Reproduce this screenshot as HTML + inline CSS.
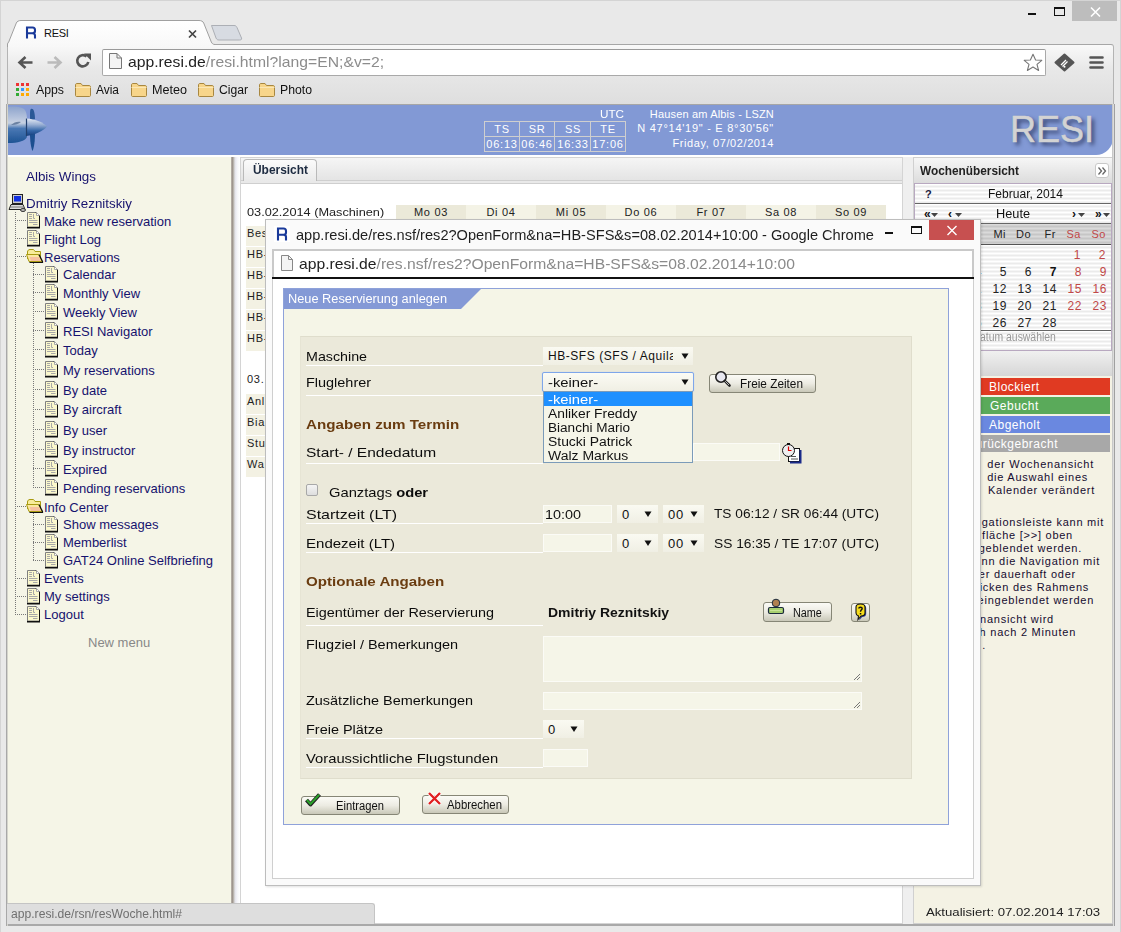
<!DOCTYPE html>
<html><head><meta charset="utf-8"><title>RESI</title><style>
*{margin:0;padding:0;box-sizing:border-box}
html,body{width:1121px;height:932px;overflow:hidden}
body{position:relative;background:#e9e9e9;font-family:"Liberation Sans",sans-serif}
.a{position:absolute}
.t{white-space:nowrap}
svg{overflow:visible}
</style></head><body>
<div class="a" style="left:0px;top:0px;width:1121px;height:1px;background:#d4d4d4"></div>
<div class="a" style="left:0px;top:0px;width:1px;height:932px;background:#d4d4d4"></div>
<div class="a" style="left:1120px;top:0px;width:1px;height:932px;background:#d4d4d4"></div>
<div class="a" style="left:1028px;top:13px;width:8px;height:2px;background:#111"></div>
<div class="a" style="left:1054px;top:7px;width:11px;height:9px;border:1px solid #111;border-top-width:2px"></div>
<div class="a" style="left:1072px;top:1px;width:45px;height:20px;background:#bdbdbd"></div>
<svg class="a" style="left:1090px;top:7px;" width="11" height="10" viewBox="0 0 11 10"><path d="M1 0.5 L10 9.5 M10 0.5 L1 9.5" stroke="#fff" stroke-width="1.6"/></svg>
<div class="a" style="left:7px;top:44px;width:1107px;height:61px;background:linear-gradient(#f9f9f9,#e8e8e8 40%,#dedede);border-top-right-radius:3px;border-right:1px solid #b4b4b4;border-left:1px solid #b4b4b4;border-top:1px solid #a6a6a6"></div>
<svg class="a" style="left:0px;top:0px;" width="260" height="50" viewBox="0 0 260 50"><defs><linearGradient id="tg" x1="0" y1="0" x2="0" y2="1"><stop offset="0" stop-color="#ffffff"/><stop offset="1" stop-color="#f8f8f8"/></linearGradient></defs><path d="M7.5 47 V44 C7.5 43.3 8 42.8 8.7 42 L16.3 23 C17 21.5 18.5 20.5 21 20.5 L199 20.5 C201.5 20.5 203 21.5 203.7 23 L211.3 42 C212 43.5 213 44.5 215 44.5 L215 47 Z" fill="url(#tg)"/><path d="M7.5 47 V44 C7.5 43.3 8 42.8 8.7 42 L16.3 23 C17 21.5 18.5 20.5 21 20.5 L199 20.5 C201.5 20.5 203 21.5 203.7 23 L211.3 42 C212 43.5 213 44.5 215 44.5" fill="none" stroke="#a0a0a0" stroke-width="1"/><path d="M211.5 25.5 L234 25.5 C235.5 25.5 236.3 26 237 27.5 L241.5 38 C242 39.5 241 40 239.5 40 L219 40 C217.5 40 216.7 39.5 216 38 Z" fill="#d7dbe2" stroke="#acafb5" stroke-width="1"/></svg>
<div class="a" style="left:25px;top:26px;width:12px;height:12px;background:#fff"></div>
<svg class="a" style="left:25px;top:26px;" width="12" height="13" viewBox="0 0 12 13"><path d="M2 12.5 V1.5 H7.5 C9 1.5 10 2.3 10 4 V5 C10 6.6 9 7.2 7.5 7.2 H2 M7.2 7.2 C9 7.2 10 8 10 9.5 V12.5" fill="none" stroke="#1a3a9a" stroke-width="2.1"/></svg>
<div id="t01451643" class="a t" style="left:44px;top:23px;font-size:11px;line-height:20px;color:#111;font-weight:normal;letter-spacing:-0.3px">RESI</div>
<svg class="a" style="left:188px;top:30px;" width="9" height="8" viewBox="0 0 9 8"><path d="M1 0.5 L8 7.5 M8 0.5 L1 7.5" stroke="#444" stroke-width="1.7"/></svg>
<svg class="a" style="left:17px;top:55px;" width="17" height="15" viewBox="0 0 17 15"><path d="M15.5 7.5 H4 M8.5 2 L2.5 7.5 L8.5 13" fill="none" stroke="#555" stroke-width="2.6" stroke-linejoin="miter"/></svg>
<svg class="a" style="left:46px;top:55px;" width="17" height="15" viewBox="0 0 17 15"><path d="M1.5 7.5 H13 M8.5 2 L14.5 7.5 L8.5 13" fill="none" stroke="#bbb" stroke-width="2.6"/></svg>
<svg class="a" style="left:75px;top:53px;" width="17" height="17" viewBox="0 0 17 17"><path d="M13.3 9 A5.6 5.6 0 1 1 11.5 3.5" fill="none" stroke="#555" stroke-width="2.6"/><path d="M9 0.5 L16 0.5 L16 7.5 Z" fill="#555"/></svg>
<div class="a" style="left:102px;top:49px;width:944px;height:27px;background:#fff;border:1px solid #a9a9a9;border-top-color:#9a9a9a;border-radius:2px"></div>
<svg class="a" style="left:109px;top:53px;" width="13" height="16" viewBox="0 0 13 16"><path d="M0.5 0.5 H8 L12.5 5 V15.5 H0.5 Z" fill="#f4f4f4" stroke="#777"/><path d="M8 0.5 V5 H12.5" fill="none" stroke="#777"/></svg>
<div id="tc79b2f64" class="a t" style="left:128px;top:52px;font-size:15px;line-height:20px;color:#222;font-weight:normal;transform:scaleX(1.0480);transform-origin:0 0;">app.resi.de<span style="color:#8c8c8c">/resi.html?lang=EN;&amp;v=2;</span></div>
<svg class="a" style="left:1023px;top:53px;" width="20" height="19" viewBox="0 0 20 19"><path d="M10 1.2 L12.6 7 L18.8 7.3 L14 11.3 L15.6 17.5 L10 14 L4.4 17.5 L6 11.3 L1.2 7.3 L7.4 7 Z" fill="#fff" stroke="#777" stroke-width="1.1" stroke-linejoin="round"/></svg>
<svg class="a" style="left:1054px;top:53px;" width="21" height="19" viewBox="0 0 21 19"><path d="M10.5 1.5 L19.5 9.5 L10.5 17.5 L1.5 9.5 Z" fill="#555" stroke="#555" stroke-width="2" stroke-linejoin="round"/><path d="M7 12 L12 7 M8.5 13.5 L13.5 8.5" stroke="#fff" stroke-width="1.3"/><circle cx="10.5" cy="13.8" r="1" fill="#fff"/></svg>
<svg class="a" style="left:1089px;top:56px;" width="15" height="14" viewBox="0 0 15 14"><path d="M1.5 1.5 H13.5 M1.5 6.5 H13.5 M1.5 11.5 H13.5" stroke="#555" stroke-width="2.6" stroke-linecap="round"/></svg>
<svg class="a" style="left:16px;top:83px;" width="14" height="14" viewBox="0 0 14 14"><rect x="0" y="0" width="3" height="3" fill="#e33"/><rect x="5" y="0" width="3" height="3" fill="#e33"/><rect x="10" y="0" width="3" height="3" fill="#e33"/><rect x="0" y="5" width="3" height="3" fill="#3a3"/><rect x="5" y="5" width="3" height="3" fill="#39f"/><rect x="10" y="5" width="3" height="3" fill="#fa0"/><rect x="0" y="10" width="3" height="3" fill="#3a3"/><rect x="5" y="10" width="3" height="3" fill="#fa0"/><rect x="10" y="10" width="3" height="3" fill="#fa0"/></svg>
<div id="t481c23da" class="a t" style="left:36px;top:80px;font-size:12px;line-height:20px;color:#111;font-weight:normal;transform:scaleX(1.0243);transform-origin:0 0;">Apps</div>
<svg class="a" style="left:75px;top:83px;" width="16" height="14" viewBox="0 0 16 14"><path d="M0.5 2 C0.5 1 1 0.5 2 0.5 H6 L7.5 2.5 H14 C15 2.5 15.5 3 15.5 4 V12.5 C15.5 13 15 13.5 14.5 13.5 H1.5 C1 13.5 0.5 13 0.5 12.5 Z" fill="#f7d58a" stroke="#a88740"/><path d="M0.5 4.5 H15.5" stroke="#fbe7b5"/></svg>
<div id="tdad9027f" class="a t" style="left:96px;top:80px;font-size:12px;line-height:20px;color:#111;font-weight:normal;transform:scaleX(0.9936);transform-origin:0 0;">Avia</div>
<svg class="a" style="left:131px;top:83px;" width="16" height="14" viewBox="0 0 16 14"><path d="M0.5 2 C0.5 1 1 0.5 2 0.5 H6 L7.5 2.5 H14 C15 2.5 15.5 3 15.5 4 V12.5 C15.5 13 15 13.5 14.5 13.5 H1.5 C1 13.5 0.5 13 0.5 12.5 Z" fill="#f7d58a" stroke="#a88740"/><path d="M0.5 4.5 H15.5" stroke="#fbe7b5"/></svg>
<div id="t31459b48" class="a t" style="left:152px;top:80px;font-size:12px;line-height:20px;color:#111;font-weight:normal;transform:scaleX(1.0507);transform-origin:0 0;">Meteo</div>
<svg class="a" style="left:198px;top:83px;" width="16" height="14" viewBox="0 0 16 14"><path d="M0.5 2 C0.5 1 1 0.5 2 0.5 H6 L7.5 2.5 H14 C15 2.5 15.5 3 15.5 4 V12.5 C15.5 13 15 13.5 14.5 13.5 H1.5 C1 13.5 0.5 13 0.5 12.5 Z" fill="#f7d58a" stroke="#a88740"/><path d="M0.5 4.5 H15.5" stroke="#fbe7b5"/></svg>
<div id="t5c8f7181" class="a t" style="left:219px;top:80px;font-size:12px;line-height:20px;color:#111;font-weight:normal;transform:scaleX(1.0113);transform-origin:0 0;">Cigar</div>
<svg class="a" style="left:259px;top:83px;" width="16" height="14" viewBox="0 0 16 14"><path d="M0.5 2 C0.5 1 1 0.5 2 0.5 H6 L7.5 2.5 H14 C15 2.5 15.5 3 15.5 4 V12.5 C15.5 13 15 13.5 14.5 13.5 H1.5 C1 13.5 0.5 13 0.5 12.5 Z" fill="#f7d58a" stroke="#a88740"/><path d="M0.5 4.5 H15.5" stroke="#fbe7b5"/></svg>
<div id="t24e90273" class="a t" style="left:280px;top:80px;font-size:12px;line-height:20px;color:#111;font-weight:normal;transform:scaleX(1.0211);transform-origin:0 0;">Photo</div>
<div class="a" style="left:8px;top:104px;width:1105px;height:821px;background:#fff"></div>
<div class="a" style="left:8px;top:104px;width:1105px;height:1px;background:#a6a6a6"></div>
<div class="a" style="left:8px;top:105px;width:1105px;height:50px;background:#8299d5;border-bottom-right-radius:17px"></div>
<svg class="a" style="left:8px;top:105px;" width="42" height="47" viewBox="0 0 42 47"><defs><linearGradient id="pg" x1="0" y1="0" x2="0" y2="1"><stop offset="0" stop-color="#8ea4cc"/><stop offset="0.3" stop-color="#b4c2dc"/><stop offset="0.45" stop-color="#c8d2e2"/><stop offset="0.6" stop-color="#4a78b4"/><stop offset="1" stop-color="#1e5494"/></linearGradient><linearGradient id="cg" x1="0" y1="0" x2="0" y2="1"><stop offset="0" stop-color="#e4eaf4"/><stop offset="0.35" stop-color="#9ab0d4"/><stop offset="0.7" stop-color="#3466a8"/><stop offset="1" stop-color="#163e7c"/></linearGradient><filter id="bl" x="-20%" y="-20%" width="140%" height="140%"><feGaussianBlur stdDeviation="0.55"/></filter></defs><g filter="url(#bl)"><path d="M0 2 C7 1 13 2 16 4 C19 7 19 12 19 18 L19 32 C17 36 10 38 0 38 Z" fill="url(#pg)"/><path d="M3 20 C6 17 10 16 13 17 C11 19 7 20 3 20 Z" fill="#34507a" opacity="0.6"/><path d="M23 4 C25 3 27 6 27 14 L24 15 L22 14 C22 8 22 4 23 4 Z" fill="#2a5896"/><path d="M22 29 L27 29 C27 36 26 43 24.5 46 C23 43 22 36 22 29 Z" fill="#1f4f90"/><path d="M18 13.5 C28 14 35 17.5 39 21.5 C35 26 27 30 18 31 Z" fill="url(#cg)"/><path d="M18.5 13.5 L18.5 31" stroke="#22406e" stroke-width="1.2"/></g></svg>
<div class="a" style="left:484px;top:121px;width:142px;height:31px;border:1px solid #cfcfcf"></div>
<div class="a" style="left:519px;top:121px;width:1px;height:31px;background:#cfcfcf"></div>
<div class="a" style="left:554px;top:121px;width:1px;height:31px;background:#cfcfcf"></div>
<div class="a" style="left:590px;top:121px;width:1px;height:31px;background:#cfcfcf"></div>
<div class="a" style="left:484px;top:136px;width:142px;height:1px;background:#cfcfcf"></div>
<div id="t65919c31" class="a t" style="left:600px;top:104px;font-size:11px;line-height:20px;color:#fff;font-weight:normal;transform:scaleX(1.0644);transform-origin:0 0;">UTC</div>
<div class="a t" style="left:484px;top:119px;width:36px;text-align:center;font-size:11px;line-height:20px;color:#fff;letter-spacing:0.6px">TS</div>
<div class="a t" style="left:484px;top:134px;width:36px;text-align:center;font-size:11px;line-height:20px;color:#fff;letter-spacing:0.8px">06:13</div>
<div class="a t" style="left:519px;top:119px;width:36px;text-align:center;font-size:11px;line-height:20px;color:#fff;letter-spacing:0.6px">SR</div>
<div class="a t" style="left:519px;top:134px;width:36px;text-align:center;font-size:11px;line-height:20px;color:#fff;letter-spacing:0.8px">06:46</div>
<div class="a t" style="left:555px;top:119px;width:36px;text-align:center;font-size:11px;line-height:20px;color:#fff;letter-spacing:0.6px">SS</div>
<div class="a t" style="left:555px;top:134px;width:36px;text-align:center;font-size:11px;line-height:20px;color:#fff;letter-spacing:0.8px">16:33</div>
<div class="a t" style="left:590px;top:119px;width:36px;text-align:center;font-size:11px;line-height:20px;color:#fff;letter-spacing:0.6px">TE</div>
<div class="a t" style="left:590px;top:134px;width:36px;text-align:center;font-size:11px;line-height:20px;color:#fff;letter-spacing:0.8px">17:06</div>
<div class="a t" id="rcc1d4a6c" style="right:347px;top:104px;font-size:11px;line-height:20px;color:#fff;letter-spacing:0.170px;">Hausen am Albis - LSZN</div>
<div class="a t" id="rd31bb80b" style="right:347px;top:118px;font-size:11px;line-height:20px;color:#fff;letter-spacing:0.727px;">N 47°14'19" - E 8°30'56"</div>
<div class="a t" id="r0c8ea4c8" style="right:347px;top:133px;font-size:11px;line-height:20px;color:#fff;letter-spacing:0.593px;">Friday, 07/02/2014</div>
<div class="a" style="left:1010px;top:112px;font-size:36px;line-height:36px;color:#d3d3d3;text-shadow:3px 3px 4px #34406a;-webkit-text-stroke:0.5px #d3d3d3;letter-spacing:0px">RESI</div>
<div class="a" style="left:8px;top:157px;width:223px;height:768px;background:#f5f5e7"></div>
<div class="a" style="left:231px;top:157px;width:9px;height:768px;background:linear-gradient(90deg,#bdb6ae 0,#9e968e 1.5px,#c6c2be 3px,#e3e3ea 4px,#f4f4f8 6px,#fff 9px)"></div>
<div id="t1f0e2cf7" class="a t" style="left:26px;top:167px;font-size:13px;line-height:20px;color:#16126e;font-weight:normal;transform:scaleX(1.0311);transform-origin:0 0;">Albis Wings</div>
<svg class="a" style="left:8px;top:194px;" width="18" height="18" viewBox="0 0 18 18"><rect x="4.5" y="0.5" width="10" height="9" fill="#ccc" stroke="#222"/><rect x="6" y="2" width="7" height="5.5" fill="#1030e0"/><path d="M1 15.5 L3 10.5 H15 L17 15.5 Z" fill="#ddd" stroke="#222"/><path d="M2 13 H16" stroke="#777"/><ellipse cx="15" cy="16" rx="2.5" ry="1.5" fill="#bbb" stroke="#333"/></svg>
<div id="tac2cf840" class="a t" style="left:26px;top:194px;font-size:13px;line-height:20px;color:#16126e;font-weight:normal;transform:scaleX(1.0264);transform-origin:0 0;">Dmitriy Reznitskiy</div>
<svg class="a" style="left:27px;top:212px;" width="14" height="17" viewBox="0 0 14 17"><path d="M0.5 0.5 H9 L12.5 4 V15 H0.5 Z" fill="#fbf8cc" stroke="#808080"/><path d="M9 0.5 L12.5 4 V15.5 M0 15.5 H13" fill="none" stroke="#111" stroke-width="1"/><path d="M0 16 H13" stroke="#111" stroke-width="1"/><path d="M9.5 0.5 V3.5 H12.5" fill="#fff" stroke="#999" stroke-width="0.8"/><path d="M2 2.5 H5 M2 4.5 H5 M2 6.5 H5 M6.5 2 V6.5 H8 M2 8.5 H10.5 M2 10.5 H10.5 M6 12.5 H10.5" stroke="#a8a8a8" stroke-width="1" fill="none"/></svg>
<div class="a" style="left:15px;top:220px;width:12px;height:1px;background:repeating-linear-gradient(90deg,#777 0 1px,transparent 1px 2px)"></div>
<div id="t6f4574a2" class="a t" style="left:44px;top:212px;font-size:13px;line-height:20px;color:#16126e;font-weight:normal;">Make new reservation</div>
<svg class="a" style="left:27px;top:230px;" width="14" height="17" viewBox="0 0 14 17"><path d="M0.5 0.5 H9 L12.5 4 V15 H0.5 Z" fill="#fbf8cc" stroke="#808080"/><path d="M9 0.5 L12.5 4 V15.5 M0 15.5 H13" fill="none" stroke="#111" stroke-width="1"/><path d="M0 16 H13" stroke="#111" stroke-width="1"/><path d="M9.5 0.5 V3.5 H12.5" fill="#fff" stroke="#999" stroke-width="0.8"/><path d="M2 2.5 H5 M2 4.5 H5 M2 6.5 H5 M6.5 2 V6.5 H8 M2 8.5 H10.5 M2 10.5 H10.5 M6 12.5 H10.5" stroke="#a8a8a8" stroke-width="1" fill="none"/></svg>
<div class="a" style="left:15px;top:238px;width:12px;height:1px;background:repeating-linear-gradient(90deg,#777 0 1px,transparent 1px 2px)"></div>
<div id="t707657b8" class="a t" style="left:44px;top:230px;font-size:13px;line-height:20px;color:#16126e;font-weight:normal;">Flight Log</div>
<svg class="a" style="left:26px;top:249px;" width="17" height="14" viewBox="0 0 17 14"><path d="M1.5 10 V3 C1.5 1.5 2.5 0.5 4 0.5 H7 C8 0.5 8.5 1.5 9 2.5 H14.5 V10" fill="#f8ec9a" stroke="#a89a10"/><path d="M0.5 5.5 H12.5 L16 12.5 H3 Z" fill="#fae8a0" stroke="#a89a10"/><path d="M3.5 8 H13 L15 12 H5 Z" fill="#f6c0a0"/><path d="M13 5.5 L16.5 12.5 V13.5 H3.5" fill="none" stroke="#111" stroke-width="1.2"/></svg>
<div class="a" style="left:15px;top:256px;width:11px;height:1px;background:repeating-linear-gradient(90deg,#777 0 1px,transparent 1px 2px)"></div>
<div id="t05da8306" class="a t" style="left:44px;top:248px;font-size:13px;line-height:20px;color:#16126e;font-weight:normal;">Reservations</div>
<svg class="a" style="left:45px;top:266px;" width="14" height="17" viewBox="0 0 14 17"><path d="M0.5 0.5 H9 L12.5 4 V15 H0.5 Z" fill="#fbf8cc" stroke="#808080"/><path d="M9 0.5 L12.5 4 V15.5 M0 15.5 H13" fill="none" stroke="#111" stroke-width="1"/><path d="M0 16 H13" stroke="#111" stroke-width="1"/><path d="M9.5 0.5 V3.5 H12.5" fill="#fff" stroke="#999" stroke-width="0.8"/><path d="M2 2.5 H5 M2 4.5 H5 M2 6.5 H5 M6.5 2 V6.5 H8 M2 8.5 H10.5 M2 10.5 H10.5 M6 12.5 H10.5" stroke="#a8a8a8" stroke-width="1" fill="none"/></svg>
<div class="a" style="left:33px;top:274px;width:12px;height:1px;background:repeating-linear-gradient(90deg,#777 0 1px,transparent 1px 2px)"></div>
<div id="t145ddcab" class="a t" style="left:63px;top:265px;font-size:13px;line-height:20px;color:#16126e;font-weight:normal;">Calendar</div>
<svg class="a" style="left:45px;top:284px;" width="14" height="17" viewBox="0 0 14 17"><path d="M0.5 0.5 H9 L12.5 4 V15 H0.5 Z" fill="#fbf8cc" stroke="#808080"/><path d="M9 0.5 L12.5 4 V15.5 M0 15.5 H13" fill="none" stroke="#111" stroke-width="1"/><path d="M0 16 H13" stroke="#111" stroke-width="1"/><path d="M9.5 0.5 V3.5 H12.5" fill="#fff" stroke="#999" stroke-width="0.8"/><path d="M2 2.5 H5 M2 4.5 H5 M2 6.5 H5 M6.5 2 V6.5 H8 M2 8.5 H10.5 M2 10.5 H10.5 M6 12.5 H10.5" stroke="#a8a8a8" stroke-width="1" fill="none"/></svg>
<div class="a" style="left:33px;top:292px;width:12px;height:1px;background:repeating-linear-gradient(90deg,#777 0 1px,transparent 1px 2px)"></div>
<div id="t2f721ccd" class="a t" style="left:63px;top:284px;font-size:13px;line-height:20px;color:#16126e;font-weight:normal;">Monthly View</div>
<svg class="a" style="left:45px;top:303px;" width="14" height="17" viewBox="0 0 14 17"><path d="M0.5 0.5 H9 L12.5 4 V15 H0.5 Z" fill="#fbf8cc" stroke="#808080"/><path d="M9 0.5 L12.5 4 V15.5 M0 15.5 H13" fill="none" stroke="#111" stroke-width="1"/><path d="M0 16 H13" stroke="#111" stroke-width="1"/><path d="M9.5 0.5 V3.5 H12.5" fill="#fff" stroke="#999" stroke-width="0.8"/><path d="M2 2.5 H5 M2 4.5 H5 M2 6.5 H5 M6.5 2 V6.5 H8 M2 8.5 H10.5 M2 10.5 H10.5 M6 12.5 H10.5" stroke="#a8a8a8" stroke-width="1" fill="none"/></svg>
<div class="a" style="left:33px;top:311px;width:12px;height:1px;background:repeating-linear-gradient(90deg,#777 0 1px,transparent 1px 2px)"></div>
<div id="t1b36f34c" class="a t" style="left:63px;top:303px;font-size:13px;line-height:20px;color:#16126e;font-weight:normal;">Weekly View</div>
<svg class="a" style="left:45px;top:322px;" width="14" height="17" viewBox="0 0 14 17"><path d="M0.5 0.5 H9 L12.5 4 V15 H0.5 Z" fill="#fbf8cc" stroke="#808080"/><path d="M9 0.5 L12.5 4 V15.5 M0 15.5 H13" fill="none" stroke="#111" stroke-width="1"/><path d="M0 16 H13" stroke="#111" stroke-width="1"/><path d="M9.5 0.5 V3.5 H12.5" fill="#fff" stroke="#999" stroke-width="0.8"/><path d="M2 2.5 H5 M2 4.5 H5 M2 6.5 H5 M6.5 2 V6.5 H8 M2 8.5 H10.5 M2 10.5 H10.5 M6 12.5 H10.5" stroke="#a8a8a8" stroke-width="1" fill="none"/></svg>
<div class="a" style="left:33px;top:330px;width:12px;height:1px;background:repeating-linear-gradient(90deg,#777 0 1px,transparent 1px 2px)"></div>
<div id="t644daee1" class="a t" style="left:63px;top:322px;font-size:13px;line-height:20px;color:#16126e;font-weight:normal;">RESI Navigator</div>
<svg class="a" style="left:45px;top:341px;" width="14" height="17" viewBox="0 0 14 17"><path d="M0.5 0.5 H9 L12.5 4 V15 H0.5 Z" fill="#fbf8cc" stroke="#808080"/><path d="M9 0.5 L12.5 4 V15.5 M0 15.5 H13" fill="none" stroke="#111" stroke-width="1"/><path d="M0 16 H13" stroke="#111" stroke-width="1"/><path d="M9.5 0.5 V3.5 H12.5" fill="#fff" stroke="#999" stroke-width="0.8"/><path d="M2 2.5 H5 M2 4.5 H5 M2 6.5 H5 M6.5 2 V6.5 H8 M2 8.5 H10.5 M2 10.5 H10.5 M6 12.5 H10.5" stroke="#a8a8a8" stroke-width="1" fill="none"/></svg>
<div class="a" style="left:33px;top:349px;width:12px;height:1px;background:repeating-linear-gradient(90deg,#777 0 1px,transparent 1px 2px)"></div>
<div id="tac2a235c" class="a t" style="left:63px;top:341px;font-size:13px;line-height:20px;color:#16126e;font-weight:normal;">Today</div>
<svg class="a" style="left:45px;top:361px;" width="14" height="17" viewBox="0 0 14 17"><path d="M0.5 0.5 H9 L12.5 4 V15 H0.5 Z" fill="#fbf8cc" stroke="#808080"/><path d="M9 0.5 L12.5 4 V15.5 M0 15.5 H13" fill="none" stroke="#111" stroke-width="1"/><path d="M0 16 H13" stroke="#111" stroke-width="1"/><path d="M9.5 0.5 V3.5 H12.5" fill="#fff" stroke="#999" stroke-width="0.8"/><path d="M2 2.5 H5 M2 4.5 H5 M2 6.5 H5 M6.5 2 V6.5 H8 M2 8.5 H10.5 M2 10.5 H10.5 M6 12.5 H10.5" stroke="#a8a8a8" stroke-width="1" fill="none"/></svg>
<div class="a" style="left:33px;top:369px;width:12px;height:1px;background:repeating-linear-gradient(90deg,#777 0 1px,transparent 1px 2px)"></div>
<div id="tdca9e473" class="a t" style="left:63px;top:361px;font-size:13px;line-height:20px;color:#16126e;font-weight:normal;">My reservations</div>
<svg class="a" style="left:45px;top:381px;" width="14" height="17" viewBox="0 0 14 17"><path d="M0.5 0.5 H9 L12.5 4 V15 H0.5 Z" fill="#fbf8cc" stroke="#808080"/><path d="M9 0.5 L12.5 4 V15.5 M0 15.5 H13" fill="none" stroke="#111" stroke-width="1"/><path d="M0 16 H13" stroke="#111" stroke-width="1"/><path d="M9.5 0.5 V3.5 H12.5" fill="#fff" stroke="#999" stroke-width="0.8"/><path d="M2 2.5 H5 M2 4.5 H5 M2 6.5 H5 M6.5 2 V6.5 H8 M2 8.5 H10.5 M2 10.5 H10.5 M6 12.5 H10.5" stroke="#a8a8a8" stroke-width="1" fill="none"/></svg>
<div class="a" style="left:33px;top:389px;width:12px;height:1px;background:repeating-linear-gradient(90deg,#777 0 1px,transparent 1px 2px)"></div>
<div id="tfe1371e7" class="a t" style="left:63px;top:381px;font-size:13px;line-height:20px;color:#16126e;font-weight:normal;">By date</div>
<svg class="a" style="left:45px;top:401px;" width="14" height="17" viewBox="0 0 14 17"><path d="M0.5 0.5 H9 L12.5 4 V15 H0.5 Z" fill="#fbf8cc" stroke="#808080"/><path d="M9 0.5 L12.5 4 V15.5 M0 15.5 H13" fill="none" stroke="#111" stroke-width="1"/><path d="M0 16 H13" stroke="#111" stroke-width="1"/><path d="M9.5 0.5 V3.5 H12.5" fill="#fff" stroke="#999" stroke-width="0.8"/><path d="M2 2.5 H5 M2 4.5 H5 M2 6.5 H5 M6.5 2 V6.5 H8 M2 8.5 H10.5 M2 10.5 H10.5 M6 12.5 H10.5" stroke="#a8a8a8" stroke-width="1" fill="none"/></svg>
<div class="a" style="left:33px;top:409px;width:12px;height:1px;background:repeating-linear-gradient(90deg,#777 0 1px,transparent 1px 2px)"></div>
<div id="t19cd7436" class="a t" style="left:63px;top:400px;font-size:13px;line-height:20px;color:#16126e;font-weight:normal;">By aircraft</div>
<svg class="a" style="left:45px;top:421px;" width="14" height="17" viewBox="0 0 14 17"><path d="M0.5 0.5 H9 L12.5 4 V15 H0.5 Z" fill="#fbf8cc" stroke="#808080"/><path d="M9 0.5 L12.5 4 V15.5 M0 15.5 H13" fill="none" stroke="#111" stroke-width="1"/><path d="M0 16 H13" stroke="#111" stroke-width="1"/><path d="M9.5 0.5 V3.5 H12.5" fill="#fff" stroke="#999" stroke-width="0.8"/><path d="M2 2.5 H5 M2 4.5 H5 M2 6.5 H5 M6.5 2 V6.5 H8 M2 8.5 H10.5 M2 10.5 H10.5 M6 12.5 H10.5" stroke="#a8a8a8" stroke-width="1" fill="none"/></svg>
<div class="a" style="left:33px;top:429px;width:12px;height:1px;background:repeating-linear-gradient(90deg,#777 0 1px,transparent 1px 2px)"></div>
<div id="t77cd9543" class="a t" style="left:63px;top:421px;font-size:13px;line-height:20px;color:#16126e;font-weight:normal;">By user</div>
<svg class="a" style="left:45px;top:441px;" width="14" height="17" viewBox="0 0 14 17"><path d="M0.5 0.5 H9 L12.5 4 V15 H0.5 Z" fill="#fbf8cc" stroke="#808080"/><path d="M9 0.5 L12.5 4 V15.5 M0 15.5 H13" fill="none" stroke="#111" stroke-width="1"/><path d="M0 16 H13" stroke="#111" stroke-width="1"/><path d="M9.5 0.5 V3.5 H12.5" fill="#fff" stroke="#999" stroke-width="0.8"/><path d="M2 2.5 H5 M2 4.5 H5 M2 6.5 H5 M6.5 2 V6.5 H8 M2 8.5 H10.5 M2 10.5 H10.5 M6 12.5 H10.5" stroke="#a8a8a8" stroke-width="1" fill="none"/></svg>
<div class="a" style="left:33px;top:449px;width:12px;height:1px;background:repeating-linear-gradient(90deg,#777 0 1px,transparent 1px 2px)"></div>
<div id="t8b5fa198" class="a t" style="left:63px;top:441px;font-size:13px;line-height:20px;color:#16126e;font-weight:normal;">By instructor</div>
<svg class="a" style="left:45px;top:460px;" width="14" height="17" viewBox="0 0 14 17"><path d="M0.5 0.5 H9 L12.5 4 V15 H0.5 Z" fill="#fbf8cc" stroke="#808080"/><path d="M9 0.5 L12.5 4 V15.5 M0 15.5 H13" fill="none" stroke="#111" stroke-width="1"/><path d="M0 16 H13" stroke="#111" stroke-width="1"/><path d="M9.5 0.5 V3.5 H12.5" fill="#fff" stroke="#999" stroke-width="0.8"/><path d="M2 2.5 H5 M2 4.5 H5 M2 6.5 H5 M6.5 2 V6.5 H8 M2 8.5 H10.5 M2 10.5 H10.5 M6 12.5 H10.5" stroke="#a8a8a8" stroke-width="1" fill="none"/></svg>
<div class="a" style="left:33px;top:468px;width:12px;height:1px;background:repeating-linear-gradient(90deg,#777 0 1px,transparent 1px 2px)"></div>
<div id="tdbff0a59" class="a t" style="left:63px;top:460px;font-size:13px;line-height:20px;color:#16126e;font-weight:normal;">Expired</div>
<svg class="a" style="left:45px;top:479px;" width="14" height="17" viewBox="0 0 14 17"><path d="M0.5 0.5 H9 L12.5 4 V15 H0.5 Z" fill="#fbf8cc" stroke="#808080"/><path d="M9 0.5 L12.5 4 V15.5 M0 15.5 H13" fill="none" stroke="#111" stroke-width="1"/><path d="M0 16 H13" stroke="#111" stroke-width="1"/><path d="M9.5 0.5 V3.5 H12.5" fill="#fff" stroke="#999" stroke-width="0.8"/><path d="M2 2.5 H5 M2 4.5 H5 M2 6.5 H5 M6.5 2 V6.5 H8 M2 8.5 H10.5 M2 10.5 H10.5 M6 12.5 H10.5" stroke="#a8a8a8" stroke-width="1" fill="none"/></svg>
<div class="a" style="left:33px;top:487px;width:12px;height:1px;background:repeating-linear-gradient(90deg,#777 0 1px,transparent 1px 2px)"></div>
<div id="t41d2f41b" class="a t" style="left:63px;top:479px;font-size:13px;line-height:20px;color:#16126e;font-weight:normal;">Pending reservations</div>
<svg class="a" style="left:26px;top:499px;" width="17" height="14" viewBox="0 0 17 14"><path d="M1.5 10 V3 C1.5 1.5 2.5 0.5 4 0.5 H7 C8 0.5 8.5 1.5 9 2.5 H14.5 V10" fill="#f8ec9a" stroke="#a89a10"/><path d="M0.5 5.5 H12.5 L16 12.5 H3 Z" fill="#fae8a0" stroke="#a89a10"/><path d="M3.5 8 H13 L15 12 H5 Z" fill="#f6c0a0"/><path d="M13 5.5 L16.5 12.5 V13.5 H3.5" fill="none" stroke="#111" stroke-width="1.2"/></svg>
<div class="a" style="left:15px;top:506px;width:11px;height:1px;background:repeating-linear-gradient(90deg,#777 0 1px,transparent 1px 2px)"></div>
<div id="t2df63c0e" class="a t" style="left:44px;top:498px;font-size:13px;line-height:20px;color:#16126e;font-weight:normal;">Info Center</div>
<svg class="a" style="left:45px;top:516px;" width="14" height="17" viewBox="0 0 14 17"><path d="M0.5 0.5 H9 L12.5 4 V15 H0.5 Z" fill="#fbf8cc" stroke="#808080"/><path d="M9 0.5 L12.5 4 V15.5 M0 15.5 H13" fill="none" stroke="#111" stroke-width="1"/><path d="M0 16 H13" stroke="#111" stroke-width="1"/><path d="M9.5 0.5 V3.5 H12.5" fill="#fff" stroke="#999" stroke-width="0.8"/><path d="M2 2.5 H5 M2 4.5 H5 M2 6.5 H5 M6.5 2 V6.5 H8 M2 8.5 H10.5 M2 10.5 H10.5 M6 12.5 H10.5" stroke="#a8a8a8" stroke-width="1" fill="none"/></svg>
<div class="a" style="left:33px;top:524px;width:12px;height:1px;background:repeating-linear-gradient(90deg,#777 0 1px,transparent 1px 2px)"></div>
<div id="t7256c93c" class="a t" style="left:63px;top:515px;font-size:13px;line-height:20px;color:#16126e;font-weight:normal;">Show messages</div>
<svg class="a" style="left:45px;top:534px;" width="14" height="17" viewBox="0 0 14 17"><path d="M0.5 0.5 H9 L12.5 4 V15 H0.5 Z" fill="#fbf8cc" stroke="#808080"/><path d="M9 0.5 L12.5 4 V15.5 M0 15.5 H13" fill="none" stroke="#111" stroke-width="1"/><path d="M0 16 H13" stroke="#111" stroke-width="1"/><path d="M9.5 0.5 V3.5 H12.5" fill="#fff" stroke="#999" stroke-width="0.8"/><path d="M2 2.5 H5 M2 4.5 H5 M2 6.5 H5 M6.5 2 V6.5 H8 M2 8.5 H10.5 M2 10.5 H10.5 M6 12.5 H10.5" stroke="#a8a8a8" stroke-width="1" fill="none"/></svg>
<div class="a" style="left:33px;top:542px;width:12px;height:1px;background:repeating-linear-gradient(90deg,#777 0 1px,transparent 1px 2px)"></div>
<div id="tfabb8f11" class="a t" style="left:63px;top:533px;font-size:13px;line-height:20px;color:#16126e;font-weight:normal;">Memberlist</div>
<svg class="a" style="left:45px;top:552px;" width="14" height="17" viewBox="0 0 14 17"><path d="M0.5 0.5 H9 L12.5 4 V15 H0.5 Z" fill="#fbf8cc" stroke="#808080"/><path d="M9 0.5 L12.5 4 V15.5 M0 15.5 H13" fill="none" stroke="#111" stroke-width="1"/><path d="M0 16 H13" stroke="#111" stroke-width="1"/><path d="M9.5 0.5 V3.5 H12.5" fill="#fff" stroke="#999" stroke-width="0.8"/><path d="M2 2.5 H5 M2 4.5 H5 M2 6.5 H5 M6.5 2 V6.5 H8 M2 8.5 H10.5 M2 10.5 H10.5 M6 12.5 H10.5" stroke="#a8a8a8" stroke-width="1" fill="none"/></svg>
<div class="a" style="left:33px;top:560px;width:12px;height:1px;background:repeating-linear-gradient(90deg,#777 0 1px,transparent 1px 2px)"></div>
<div id="t305c6222" class="a t" style="left:63px;top:551px;font-size:13px;line-height:20px;color:#16126e;font-weight:normal;">GAT24 Online Selfbriefing</div>
<svg class="a" style="left:27px;top:570px;" width="14" height="17" viewBox="0 0 14 17"><path d="M0.5 0.5 H9 L12.5 4 V15 H0.5 Z" fill="#fbf8cc" stroke="#808080"/><path d="M9 0.5 L12.5 4 V15.5 M0 15.5 H13" fill="none" stroke="#111" stroke-width="1"/><path d="M0 16 H13" stroke="#111" stroke-width="1"/><path d="M9.5 0.5 V3.5 H12.5" fill="#fff" stroke="#999" stroke-width="0.8"/><path d="M2 2.5 H5 M2 4.5 H5 M2 6.5 H5 M6.5 2 V6.5 H8 M2 8.5 H10.5 M2 10.5 H10.5 M6 12.5 H10.5" stroke="#a8a8a8" stroke-width="1" fill="none"/></svg>
<div class="a" style="left:15px;top:578px;width:12px;height:1px;background:repeating-linear-gradient(90deg,#777 0 1px,transparent 1px 2px)"></div>
<div id="tc956e2b7" class="a t" style="left:44px;top:569px;font-size:13px;line-height:20px;color:#16126e;font-weight:normal;">Events</div>
<svg class="a" style="left:27px;top:588px;" width="14" height="17" viewBox="0 0 14 17"><path d="M0.5 0.5 H9 L12.5 4 V15 H0.5 Z" fill="#fbf8cc" stroke="#808080"/><path d="M9 0.5 L12.5 4 V15.5 M0 15.5 H13" fill="none" stroke="#111" stroke-width="1"/><path d="M0 16 H13" stroke="#111" stroke-width="1"/><path d="M9.5 0.5 V3.5 H12.5" fill="#fff" stroke="#999" stroke-width="0.8"/><path d="M2 2.5 H5 M2 4.5 H5 M2 6.5 H5 M6.5 2 V6.5 H8 M2 8.5 H10.5 M2 10.5 H10.5 M6 12.5 H10.5" stroke="#a8a8a8" stroke-width="1" fill="none"/></svg>
<div class="a" style="left:15px;top:596px;width:12px;height:1px;background:repeating-linear-gradient(90deg,#777 0 1px,transparent 1px 2px)"></div>
<div id="tf656bd96" class="a t" style="left:44px;top:587px;font-size:13px;line-height:20px;color:#16126e;font-weight:normal;">My settings</div>
<svg class="a" style="left:27px;top:606px;" width="14" height="17" viewBox="0 0 14 17"><path d="M0.5 0.5 H9 L12.5 4 V15 H0.5 Z" fill="#fbf8cc" stroke="#808080"/><path d="M9 0.5 L12.5 4 V15.5 M0 15.5 H13" fill="none" stroke="#111" stroke-width="1"/><path d="M0 16 H13" stroke="#111" stroke-width="1"/><path d="M9.5 0.5 V3.5 H12.5" fill="#fff" stroke="#999" stroke-width="0.8"/><path d="M2 2.5 H5 M2 4.5 H5 M2 6.5 H5 M6.5 2 V6.5 H8 M2 8.5 H10.5 M2 10.5 H10.5 M6 12.5 H10.5" stroke="#a8a8a8" stroke-width="1" fill="none"/></svg>
<div class="a" style="left:15px;top:614px;width:12px;height:1px;background:repeating-linear-gradient(90deg,#777 0 1px,transparent 1px 2px)"></div>
<div id="t0585d29b" class="a t" style="left:44px;top:605px;font-size:13px;line-height:20px;color:#16126e;font-weight:normal;">Logout</div>
<div class="a" style="left:15px;top:212px;width:1px;height:403px;background:repeating-linear-gradient(180deg,#777 0 1px,transparent 1px 2px)"></div>
<div class="a" style="left:33px;top:263px;width:1px;height:226px;background:repeating-linear-gradient(180deg,#777 0 1px,transparent 1px 2px)"></div>
<div class="a" style="left:33px;top:513px;width:1px;height:48px;background:repeating-linear-gradient(180deg,#777 0 1px,transparent 1px 2px)"></div>
<div id="tcd2cacc1" class="a t" style="left:88px;top:633px;font-size:13px;line-height:20px;color:#888;font-weight:normal;">New menu</div>
<div class="a" style="left:240px;top:157px;width:663px;height:767px;background:#fff;border:1px solid #d4d4d4"></div>
<div class="a" style="left:241px;top:158px;width:661px;height:25px;background:linear-gradient(#f5f5f5,#e2e2e2)"></div>
<div class="a" style="left:241px;top:180px;width:661px;height:1px;background:#cfcfcf"></div>
<div class="a" style="left:241px;top:181px;width:661px;height:2px;background:#e9e9e9"></div>
<div class="a" style="left:241px;top:183px;width:661px;height:1px;background:#cfcfcf"></div>
<div class="a" style="left:243px;top:159px;width:74px;height:22px;background:linear-gradient(#fbfbfb,#e9e9e9);border:1px solid #b9b9b9;border-bottom:none;border-radius:4px 4px 0 0"></div>
<div id="t7b78d0a1" class="a t" style="left:253px;top:160px;font-size:12px;line-height:20px;color:#1c2a40;font-weight:bold;transform:scaleX(0.9934);transform-origin:0 0;">Übersicht</div>
<div id="t88a9c58e" class="a t" style="left:247px;top:202px;font-size:11px;line-height:20px;color:#222;font-weight:normal;transform:scaleX(1.1561);transform-origin:0 0;">03.02.2014 (Maschinen)</div>
<div class="a" style="left:396px;top:205px;width:70px;height:14px;background:#ebe9d9"></div>
<div class="a t" style="left:396px;top:202px;width:70px;text-align:center;font-size:11px;line-height:20px;color:#222;letter-spacing:0.7px">Mo 03</div>
<div class="a" style="left:466px;top:205px;width:70px;height:14px;background:#f4f3e6"></div>
<div class="a t" style="left:466px;top:202px;width:70px;text-align:center;font-size:11px;line-height:20px;color:#222;letter-spacing:0.7px">Di 04</div>
<div class="a" style="left:536px;top:205px;width:70px;height:14px;background:#ebe9d9"></div>
<div class="a t" style="left:536px;top:202px;width:70px;text-align:center;font-size:11px;line-height:20px;color:#222;letter-spacing:0.7px">Mi 05</div>
<div class="a" style="left:606px;top:205px;width:70px;height:14px;background:#f4f3e6"></div>
<div class="a t" style="left:606px;top:202px;width:70px;text-align:center;font-size:11px;line-height:20px;color:#222;letter-spacing:0.7px">Do 06</div>
<div class="a" style="left:676px;top:205px;width:70px;height:14px;background:#ebe9d9"></div>
<div class="a t" style="left:676px;top:202px;width:70px;text-align:center;font-size:11px;line-height:20px;color:#222;letter-spacing:0.7px">Fr 07</div>
<div class="a" style="left:746px;top:205px;width:70px;height:14px;background:#f4f3e6"></div>
<div class="a t" style="left:746px;top:202px;width:70px;text-align:center;font-size:11px;line-height:20px;color:#222;letter-spacing:0.7px">Sa 08</div>
<div class="a" style="left:816px;top:205px;width:70px;height:14px;background:#ebe9d9"></div>
<div class="a t" style="left:816px;top:202px;width:70px;text-align:center;font-size:11px;line-height:20px;color:#222;letter-spacing:0.7px">So 09</div>
<div class="a" style="left:246px;top:226px;width:54px;height:20px;background:#f3f1e3"></div>
<div id="tfe925ef4" class="a t" style="left:247px;top:223px;font-size:11px;line-height:20px;color:#222;font-weight:normal;letter-spacing:0.7px">Bes</div>
<div class="a" style="left:246px;top:247px;width:54px;height:20px;background:#f3f1e3"></div>
<div id="t107a2220" class="a t" style="left:247px;top:244px;font-size:11px;line-height:20px;color:#222;font-weight:normal;letter-spacing:0.7px">HB-</div>
<div class="a" style="left:246px;top:268px;width:54px;height:20px;background:#f3f1e3"></div>
<div id="t020a020a" class="a t" style="left:247px;top:265px;font-size:11px;line-height:20px;color:#222;font-weight:normal;letter-spacing:0.7px">HB-</div>
<div class="a" style="left:246px;top:289px;width:54px;height:20px;background:#f3f1e3"></div>
<div id="tc442e1e2" class="a t" style="left:247px;top:286px;font-size:11px;line-height:20px;color:#222;font-weight:normal;letter-spacing:0.7px">HB-</div>
<div class="a" style="left:246px;top:310px;width:54px;height:20px;background:#f3f1e3"></div>
<div id="t8edb582f" class="a t" style="left:247px;top:307px;font-size:11px;line-height:20px;color:#222;font-weight:normal;letter-spacing:0.7px">HB-</div>
<div class="a" style="left:246px;top:331px;width:54px;height:20px;background:#f3f1e3"></div>
<div id="t4b153a72" class="a t" style="left:247px;top:328px;font-size:11px;line-height:20px;color:#222;font-weight:normal;letter-spacing:0.7px">HB-</div>
<div id="t61b586be" class="a t" style="left:247px;top:369px;font-size:11px;line-height:20px;color:#222;font-weight:normal;letter-spacing:0.7px">03.</div>
<div class="a" style="left:246px;top:394px;width:54px;height:20px;background:#f3f1e3"></div>
<div id="t97178db6" class="a t" style="left:247px;top:391px;font-size:11px;line-height:20px;color:#222;font-weight:normal;letter-spacing:0.7px">Anl</div>
<div class="a" style="left:246px;top:415px;width:54px;height:20px;background:#f3f1e3"></div>
<div id="t09435a95" class="a t" style="left:247px;top:412px;font-size:11px;line-height:20px;color:#222;font-weight:normal;letter-spacing:0.7px">Bia</div>
<div class="a" style="left:246px;top:436px;width:54px;height:20px;background:#f3f1e3"></div>
<div id="t49ee10d6" class="a t" style="left:247px;top:433px;font-size:11px;line-height:20px;color:#222;font-weight:normal;letter-spacing:0.7px">Stu</div>
<div class="a" style="left:246px;top:457px;width:54px;height:20px;background:#f3f1e3"></div>
<div id="t37280569" class="a t" style="left:247px;top:454px;font-size:11px;line-height:20px;color:#222;font-weight:normal;letter-spacing:0.7px">Wa</div>
<div class="a" style="left:903px;top:157px;width:10px;height:768px;background:#efefef"></div>
<div class="a" style="left:913px;top:157px;width:200px;height:767px;background:#f4f2e4;border:1px solid #d0d0d0"></div>
<div class="a" style="left:914px;top:158px;width:198px;height:25px;background:linear-gradient(#f6f6f6,#dcdcdc)"></div>
<div id="tb4199d24" class="a t" style="left:920px;top:161px;font-size:12px;line-height:20px;color:#222;font-weight:bold;transform:scaleX(0.9852);transform-origin:0 0;">Wochenübersicht</div>
<div class="a" style="left:1095px;top:163px;width:14px;height:15px;background:#fff;border:1px solid #c8c8c8;border-radius:3px"></div>
<svg class="a" style="left:1098px;top:167px;" width="9" height="8" viewBox="0 0 9 8"><path d="M0.5 0.5 L3.5 4 L0.5 7.5 M4.5 0.5 L7.5 4 L4.5 7.5" fill="none" stroke="#666" stroke-width="1.3"/></svg>
<div class="a" style="left:914px;top:183px;width:198px;height:168px;border:1px solid #b8a8c0;background:#fff"></div>
<div class="a" style="left:915px;top:184px;width:196px;height:19px;background:repeating-linear-gradient(180deg,#ffffff 0px,#ffffff 1px,#ebebeb 2px,#ebebeb 3px,#ffffff 4px)"></div>
<div class="a" style="left:915px;top:203px;width:196px;height:1px;background:#666"></div>
<div class="a" style="left:915px;top:204px;width:196px;height:19px;background:repeating-linear-gradient(180deg,#ffffff 0px,#ffffff 1px,#ebebeb 2px,#ebebeb 3px,#ffffff 4px)"></div>
<div class="a" style="left:915px;top:223px;width:196px;height:1px;background:#666"></div>
<div class="a" style="left:915px;top:224px;width:196px;height:20px;background:repeating-linear-gradient(180deg,#dadada 0px,#dadada 1px,#c6c6c6 2px,#c6c6c6 3px,#dadada 4px)"></div>
<div class="a" style="left:915px;top:244px;width:196px;height:1px;background:#555"></div>
<div class="a" style="left:915px;top:245px;width:196px;height:85px;background:repeating-linear-gradient(180deg,#ffffff 0px,#ffffff 1px,#ebebeb 2px,#ebebeb 3px,#ffffff 4px)"></div>
<div class="a" style="left:915px;top:330px;width:196px;height:1px;background:#666"></div>
<div class="a" style="left:915px;top:331px;width:196px;height:19px;background:repeating-linear-gradient(180deg,#ffffff 0px,#ffffff 1px,#ebebeb 2px,#ebebeb 3px,#ffffff 4px)"></div>
<div id="ta9113fad" class="a t" style="left:925px;top:184px;font-size:11px;line-height:20px;color:#1a1a40;font-weight:bold;">?</div>
<div id="t58b5f8d5" class="a t" style="left:988px;top:184px;font-size:12px;line-height:20px;color:#111;font-weight:normal;transform:scaleX(1.0038);transform-origin:0 0;">Februar, 2014</div>
<div id="t02a148a5" class="a t" style="left:996px;top:204px;font-size:12px;line-height:20px;color:#111;font-weight:normal;transform:scaleX(1.0634);transform-origin:0 0;">Heute</div>
<div id="t26198a7f" class="a t" style="left:924px;top:204px;font-size:12px;line-height:20px;color:#111;font-weight:bold;">«</div>
<div id="t5c8f202f" class="a t" style="left:948px;top:204px;font-size:12px;line-height:20px;color:#111;font-weight:bold;">‹</div>
<div id="t3156ca31" class="a t" style="left:1072px;top:204px;font-size:12px;line-height:20px;color:#111;font-weight:bold;">›</div>
<div id="tcad8cc21" class="a t" style="left:1095px;top:204px;font-size:12px;line-height:20px;color:#111;font-weight:bold;">»</div>
<svg class="a" style="left:931px;top:213px;" width="7" height="5" viewBox="0 0 7 5"><path d="M0 0 H7 L3.5 4 Z" fill="#444"/></svg>
<svg class="a" style="left:955px;top:213px;" width="7" height="5" viewBox="0 0 7 5"><path d="M0 0 H7 L3.5 4 Z" fill="#444"/></svg>
<svg class="a" style="left:1078px;top:213px;" width="7" height="5" viewBox="0 0 7 5"><path d="M0 0 H7 L3.5 4 Z" fill="#444"/></svg>
<svg class="a" style="left:1103px;top:213px;" width="7" height="5" viewBox="0 0 7 5"><path d="M0 0 H7 L3.5 4 Z" fill="#444"/></svg>
<div class="a t" style="left:981px;top:224px;width:25px;text-align:right;font-size:11px;line-height:20px;color:#222;letter-spacing:0.5px">Mi</div>
<div class="a t" style="left:1006px;top:224px;width:25px;text-align:right;font-size:11px;line-height:20px;color:#222;letter-spacing:0.5px">Do</div>
<div class="a t" style="left:1031px;top:224px;width:25px;text-align:right;font-size:11px;line-height:20px;color:#222;letter-spacing:0.5px">Fr</div>
<div class="a t" style="left:1056px;top:224px;width:25px;text-align:right;font-size:11px;line-height:20px;color:#c04848;letter-spacing:0.5px">Sa</div>
<div class="a t" style="left:1081px;top:224px;width:25px;text-align:right;font-size:11px;line-height:20px;color:#c04848;letter-spacing:0.5px">So</div>
<div class="a t" style="left:1051px;top:245px;width:30px;text-align:right;font-size:12px;line-height:20px;color:#c04848;font-weight:normal;letter-spacing:0.6px">1</div>
<div class="a t" style="left:1076px;top:245px;width:30px;text-align:right;font-size:12px;line-height:20px;color:#c04848;font-weight:normal;letter-spacing:0.6px">2</div>
<div class="a t" style="left:952px;top:262px;width:30px;text-align:right;font-size:12px;line-height:20px;color:#222;font-weight:normal;letter-spacing:0.6px">4</div>
<div class="a t" style="left:977px;top:262px;width:30px;text-align:right;font-size:12px;line-height:20px;color:#222;font-weight:normal;letter-spacing:0.6px">5</div>
<div class="a t" style="left:1002px;top:262px;width:30px;text-align:right;font-size:12px;line-height:20px;color:#222;font-weight:normal;letter-spacing:0.6px">6</div>
<div class="a t" style="left:1027px;top:262px;width:30px;text-align:right;font-size:12px;line-height:20px;color:#111;font-weight:bold;letter-spacing:0.6px">7</div>
<div class="a t" style="left:1052px;top:262px;width:30px;text-align:right;font-size:12px;line-height:20px;color:#c04848;font-weight:normal;letter-spacing:0.6px">8</div>
<div class="a t" style="left:1077px;top:262px;width:30px;text-align:right;font-size:12px;line-height:20px;color:#c04848;font-weight:normal;letter-spacing:0.6px">9</div>
<div class="a t" style="left:952px;top:279px;width:30px;text-align:right;font-size:12px;line-height:20px;color:#222;font-weight:normal;letter-spacing:0.6px">11</div>
<div class="a t" style="left:977px;top:279px;width:30px;text-align:right;font-size:12px;line-height:20px;color:#222;font-weight:normal;letter-spacing:0.6px">12</div>
<div class="a t" style="left:1002px;top:279px;width:30px;text-align:right;font-size:12px;line-height:20px;color:#222;font-weight:normal;letter-spacing:0.6px">13</div>
<div class="a t" style="left:1027px;top:279px;width:30px;text-align:right;font-size:12px;line-height:20px;color:#222;font-weight:normal;letter-spacing:0.6px">14</div>
<div class="a t" style="left:1052px;top:279px;width:30px;text-align:right;font-size:12px;line-height:20px;color:#c04848;font-weight:normal;letter-spacing:0.6px">15</div>
<div class="a t" style="left:1077px;top:279px;width:30px;text-align:right;font-size:12px;line-height:20px;color:#c04848;font-weight:normal;letter-spacing:0.6px">16</div>
<div class="a t" style="left:952px;top:296px;width:30px;text-align:right;font-size:12px;line-height:20px;color:#222;font-weight:normal;letter-spacing:0.6px">18</div>
<div class="a t" style="left:977px;top:296px;width:30px;text-align:right;font-size:12px;line-height:20px;color:#222;font-weight:normal;letter-spacing:0.6px">19</div>
<div class="a t" style="left:1002px;top:296px;width:30px;text-align:right;font-size:12px;line-height:20px;color:#222;font-weight:normal;letter-spacing:0.6px">20</div>
<div class="a t" style="left:1027px;top:296px;width:30px;text-align:right;font-size:12px;line-height:20px;color:#222;font-weight:normal;letter-spacing:0.6px">21</div>
<div class="a t" style="left:1052px;top:296px;width:30px;text-align:right;font-size:12px;line-height:20px;color:#c04848;font-weight:normal;letter-spacing:0.6px">22</div>
<div class="a t" style="left:1077px;top:296px;width:30px;text-align:right;font-size:12px;line-height:20px;color:#c04848;font-weight:normal;letter-spacing:0.6px">23</div>
<div class="a t" style="left:952px;top:313px;width:30px;text-align:right;font-size:12px;line-height:20px;color:#222;font-weight:normal;letter-spacing:0.6px">25</div>
<div class="a t" style="left:977px;top:313px;width:30px;text-align:right;font-size:12px;line-height:20px;color:#222;font-weight:normal;letter-spacing:0.6px">26</div>
<div class="a t" style="left:1002px;top:313px;width:30px;text-align:right;font-size:12px;line-height:20px;color:#222;font-weight:normal;letter-spacing:0.6px">27</div>
<div class="a t" style="left:1027px;top:313px;width:30px;text-align:right;font-size:12px;line-height:20px;color:#222;font-weight:normal;letter-spacing:0.6px">28</div>
<div id="tdbffa038" class="a t" style="left:980px;top:327px;font-size:12px;line-height:20px;color:#999;font-weight:normal;transform:scaleX(0.8681);transform-origin:0 0;">atum auswählen</div>
<div class="a" style="left:914px;top:351px;width:198px;height:25px;background:linear-gradient(#f0f0f0,#d6d6d6)"></div>
<div class="a" style="left:918px;top:378px;width:192px;height:17px;background:#e03a22"></div>
<div id="t41f34a3e" class="a t" style="left:989px;top:377px;font-size:12px;line-height:20px;color:#fff;font-weight:normal;letter-spacing:0.5px">Blockiert</div>
<div class="a" style="left:918px;top:397px;width:192px;height:17px;background:#5aaa5a"></div>
<div id="t25611d76" class="a t" style="left:990px;top:396px;font-size:12px;line-height:20px;color:#fff;font-weight:normal;letter-spacing:0.5px">Gebucht</div>
<div class="a" style="left:918px;top:416px;width:192px;height:17px;background:#6a88e0"></div>
<div id="tfde8ddcd" class="a t" style="left:989px;top:415px;font-size:12px;line-height:20px;color:#fff;font-weight:normal;letter-spacing:0.5px">Abgeholt</div>
<div class="a" style="left:918px;top:435px;width:192px;height:17px;background:#a8a8a8"></div>
<div class="a t" style="right:63px;top:434px;font-size:12px;line-height:20px;color:#fff;letter-spacing:0.5px">Zurückgebracht</div>
<div class="a t" style="right:27px;top:454px;font-size:11px;line-height:20px;color:#160c30;letter-spacing:0.75px">der Wochenansicht</div>
<div class="a t" style="right:33px;top:467px;font-size:11px;line-height:20px;color:#160c30;letter-spacing:0.75px">die Auswahl eines</div>
<div class="a t" style="right:26px;top:480px;font-size:11px;line-height:20px;color:#160c30;letter-spacing:0.75px">Kalender verändert</div>
<div class="a t" style="right:17px;top:512px;font-size:11px;line-height:20px;color:#160c30;letter-spacing:0.75px">igationsleiste kann mit</div>
<div class="a t" style="right:48px;top:525px;font-size:11px;line-height:20px;color:#160c30;letter-spacing:0.75px">fläche [&gt;&gt;] oben</div>
<div class="a t" style="right:39px;top:538px;font-size:11px;line-height:20px;color:#160c30;letter-spacing:0.75px">ngeblendet werden.</div>
<div class="a t" style="right:21px;top:551px;font-size:11px;line-height:20px;color:#160c30;letter-spacing:0.75px">ann die Navigation mit</div>
<div class="a t" style="right:45px;top:564px;font-size:11px;line-height:20px;color:#160c30;letter-spacing:0.75px">er dauerhaft oder</div>
<div class="a t" style="right:32px;top:577px;font-size:11px;line-height:20px;color:#160c30;letter-spacing:0.75px">icken des Rahmens</div>
<div class="a t" style="right:27px;top:590px;font-size:11px;line-height:20px;color:#160c30;letter-spacing:0.75px">eingeblendet werden</div>
<div class="a t" style="right:67px;top:609px;font-size:11px;line-height:20px;color:#160c30;letter-spacing:0.75px">enansicht wird</div>
<div class="a t" style="right:45px;top:622px;font-size:11px;line-height:20px;color:#160c30;letter-spacing:0.75px">h nach 2 Minuten</div>
<div class="a t" style="right:135px;top:635px;font-size:11px;line-height:20px;color:#160c30;letter-spacing:0.75px">.</div>
<div id="tfe338b91" class="a t" style="left:926px;top:902px;font-size:11px;line-height:20px;color:#222;font-weight:normal;transform:scaleX(1.1968);transform-origin:0 0;">Aktualisiert: 07.02.2014 17:03</div>
<div class="a" style="left:6px;top:104px;width:1px;height:822px;background:#a8a8a8"></div>
<div class="a" style="left:7px;top:104px;width:1px;height:822px;background:#d4d4cc"></div>
<div class="a" style="left:1112px;top:104px;width:1px;height:822px;background:#c8c8c8"></div>
<div class="a" style="left:1113px;top:104px;width:1px;height:822px;background:#dcdcdc"></div>
<div class="a" style="left:1114px;top:104px;width:1px;height:822px;background:#a0a0a0"></div>
<div class="a" style="left:7px;top:903px;width:368px;height:21px;background:#dedede;border-top:1px solid #c4c4c4;border-right:1px solid #c4c4c4;border-top-right-radius:3px"></div>
<div id="tec63c4ab" class="a t" style="left:11px;top:904px;font-size:12px;line-height:20px;color:#707070;font-weight:normal;transform:scaleX(1.0107);transform-origin:0 0;">app.resi.de/rsn/resWoche.html#</div>
<div class="a" style="left:8px;top:924px;width:1105px;height:2px;background:#a9a9a9"></div>
<div class="a" style="left:265px;top:219px;width:716px;height:667px;background:#fafafa;border:1px solid #bdbdbd;box-shadow:1px 1px 2px rgba(0,0,0,0.12)"></div>
<div class="a" style="left:274px;top:226px;width:16px;height:16px;background:#fff"></div>
<svg class="a" style="left:276px;top:227px;" width="12" height="14" viewBox="0 0 12 14"><path d="M2 13.5 V1.5 H7.5 C9 1.5 10 2.3 10 4 V5.5 C10 7 9 7.8 7.5 7.8 H2 M7.2 7.8 C9 7.8 10 8.6 10 10 V13.5" fill="none" stroke="#1a3a9a" stroke-width="2.1"/></svg>
<div id="tf896dbdb" class="a t" style="left:296px;top:225px;font-size:15px;line-height:20px;color:#1e1e1e;font-weight:normal;transform:scaleX(0.9729);transform-origin:0 0;">app.resi.de/res.nsf/res2?OpenForm&amp;na=HB-SFS&amp;s=08.02.2014+10:00 - Google Chrome</div>
<div class="a" style="left:885px;top:232px;width:8px;height:2px;background:#111"></div>
<div class="a" style="left:911px;top:226px;width:11px;height:8px;border:1px solid #111;border-top-width:2px"></div>
<div class="a" style="left:929px;top:220px;width:45px;height:20px;background:#c75050"></div>
<svg class="a" style="left:946px;top:225px;" width="12" height="11" viewBox="0 0 12 11"><path d="M1.5 1 L10.5 10 M10.5 1 L1.5 10" stroke="#fff" stroke-width="1.4"/></svg>
<div class="a" style="left:272px;top:249px;width:702px;height:630px;background:#fff;border:1px solid #cfcfcf"></div>
<div class="a" style="left:272px;top:249px;width:702px;height:28px;background:#fff;border:2px solid #c9c9c9;border-bottom:none"></div>
<div class="a" style="left:272px;top:277px;width:702px;height:2px;background:#111"></div>
<svg class="a" style="left:281px;top:255px;" width="12" height="16" viewBox="0 0 12 16"><path d="M0.5 0.5 H7.5 L11.5 4.5 V15.5 H0.5 Z" fill="#f4f4f4" stroke="#888"/><path d="M7.5 0.5 V4.5 H11.5" fill="none" stroke="#888"/></svg>
<div id="tbb58e0d3" class="a t" style="left:299px;top:254px;font-size:15px;line-height:20px;color:#222;font-weight:normal;transform:scaleX(1.0446);transform-origin:0 0;">app.resi.de<span style="color:#8a8a8a">/res.nsf/res2?OpenForm&amp;na=HB-SFS&amp;s=08.02.2014+10:00</span></div>
<div class="a" style="left:283px;top:288px;width:666px;height:537px;background:#f5f5e7;border:1px solid #8fa2da"></div>
<svg class="a" style="left:284px;top:289px;" width="200" height="20" viewBox="0 0 200 20"><path d="M0 0 H197 L177 20 H0 Z" fill="#8499d6"/></svg>
<div id="tf3d1ddbc" class="a t" style="left:288px;top:289px;font-size:12px;line-height:20px;color:#fff;font-weight:normal;transform:scaleX(1.0644);transform-origin:0 0;">Neue Reservierung anlegen</div>
<div class="a" style="left:300px;top:336px;width:612px;height:443px;background:#ebe9da;border:1px solid #dfddcc;border-left-color:#e6e4d4"></div>
<div id="t628d35ba" class="a t" style="left:306px;top:347px;font-size:13.5px;line-height:20px;color:#0c0c0c;font-weight:normal;transform:scaleX(1.0567);transform-origin:0 0;">Maschine</div>
<div class="a" style="left:306px;top:365px;width:237px;height:1px;background:#fff"></div>
<div id="t24e6c403" class="a t" style="left:306px;top:373px;font-size:13.5px;line-height:20px;color:#0c0c0c;font-weight:normal;transform:scaleX(1.0706);transform-origin:0 0;">Fluglehrer</div>
<div class="a" style="left:306px;top:395px;width:237px;height:1px;background:#fff"></div>
<div id="t95ab6f2b" class="a t" style="left:306px;top:415px;font-size:13px;line-height:20px;color:#6a3c10;font-weight:bold;transform:scaleX(1.1673);transform-origin:0 0;">Angaben zum Termin</div>
<div id="tacc201f4" class="a t" style="left:306px;top:443px;font-size:13.5px;line-height:20px;color:#0c0c0c;font-weight:normal;transform:scaleX(1.1486);transform-origin:0 0;">Start- / Endedatum</div>
<div class="a" style="left:306px;top:463px;width:237px;height:1px;background:#fff"></div>
<div class="a" style="left:306px;top:484px;width:12px;height:12px;background:linear-gradient(#f4f4f4,#dedede);border:1px solid #a8a8a8;border-radius:2px"></div>
<div id="t4a4b4a80" class="a t" style="left:329px;top:483px;font-size:13.5px;line-height:20px;color:#0c0c0c;font-weight:normal;transform:scaleX(1.0912);transform-origin:0 0;">Ganztags <b>oder</b></div>
<div id="t9e8c7b4f" class="a t" style="left:306px;top:505px;font-size:13.5px;line-height:20px;color:#0c0c0c;font-weight:normal;transform:scaleX(1.1840);transform-origin:0 0;">Startzeit (LT)</div>
<div class="a" style="left:306px;top:523px;width:237px;height:1px;background:#fff"></div>
<div id="t4a17acee" class="a t" style="left:306px;top:534px;font-size:13.5px;line-height:20px;color:#0c0c0c;font-weight:normal;transform:scaleX(1.1135);transform-origin:0 0;">Endezeit (LT)</div>
<div class="a" style="left:306px;top:552px;width:237px;height:1px;background:#fff"></div>
<div id="t707df3fb" class="a t" style="left:306px;top:572px;font-size:13px;line-height:20px;color:#6a3c10;font-weight:bold;transform:scaleX(1.1639);transform-origin:0 0;">Optionale Angaben</div>
<div id="tc4a22e27" class="a t" style="left:306px;top:603px;font-size:13.5px;line-height:20px;color:#0c0c0c;font-weight:normal;transform:scaleX(1.0665);transform-origin:0 0;">Eigentümer der Reservierung</div>
<div class="a" style="left:306px;top:625px;width:237px;height:1px;background:#fff"></div>
<div id="t3b592a0d" class="a t" style="left:306px;top:635px;font-size:13.5px;line-height:20px;color:#0c0c0c;font-weight:normal;transform:scaleX(1.0722);transform-origin:0 0;">Flugziel / Bemerkungen</div>
<div id="t8faa9c84" class="a t" style="left:306px;top:691px;font-size:13.5px;line-height:20px;color:#0c0c0c;font-weight:normal;transform:scaleX(1.0703);transform-origin:0 0;">Zusätzliche Bemerkungen</div>
<div id="t303174a7" class="a t" style="left:306px;top:720px;font-size:13.5px;line-height:20px;color:#0c0c0c;font-weight:normal;transform:scaleX(1.0700);transform-origin:0 0;">Freie Plätze</div>
<div class="a" style="left:306px;top:738px;width:237px;height:1px;background:#fff"></div>
<div id="t79decc40" class="a t" style="left:306px;top:749px;font-size:13.5px;line-height:20px;color:#0c0c0c;font-weight:normal;transform:scaleX(1.0939);transform-origin:0 0;">Voraussichtliche Flugstunden</div>
<div class="a" style="left:306px;top:767px;width:237px;height:1px;background:#fff"></div>
<div class="a" style="left:543px;top:347px;width:150px;height:18px;background:linear-gradient(#fafaf2,#f0efe4)"></div>
<div class="a" style="left:548px;top:346px;width:125px;overflow:hidden;white-space:nowrap;font-size:12px;line-height:20px;color:#111;letter-spacing:0.55px">HB-SFS (SFS / Aquila A210)</div>
<svg class="a" style="left:681px;top:353px;" width="8" height="7" viewBox="0 0 8 7"><path d="M0.5 0.5 H7.5 L4 6 Z" fill="#111"/></svg>
<div class="a" style="left:542px;top:372px;width:152px;height:20px;background:linear-gradient(#fbfbf4,#f0efe4);border:1px solid #7ea6ea;border-radius:2px;box-shadow:0 0 1px #9cc0f8"></div>
<div id="t04501bec" class="a t" style="left:548px;top:373px;font-size:12px;line-height:20px;color:#111;font-weight:normal;transform:scaleX(1.2346);transform-origin:0 0;">-keiner-</div>
<svg class="a" style="left:681px;top:379px;" width="8" height="7" viewBox="0 0 8 7"><path d="M0.5 0.5 H7.5 L4 6 Z" fill="#111"/></svg>
<div class="a" style="left:543px;top:391px;width:150px;height:72px;background:#f5f5e8;border:1px solid #7b9bb9"></div>
<div class="a" style="left:544px;top:392px;width:148px;height:14px;background:#1e90ff"></div>
<div id="te16b0f00" class="a t" style="left:548px;top:390px;font-size:12px;line-height:20px;color:#fff;font-weight:normal;transform:scaleX(1.2346);transform-origin:0 0;">-keiner-</div>
<div id="t7ed5e012" class="a t" style="left:548px;top:404px;font-size:12px;line-height:20px;color:#111;font-weight:normal;transform:scaleX(1.1522);transform-origin:0 0;">Anliker Freddy</div>
<div id="tda7d2801" class="a t" style="left:548px;top:418px;font-size:12px;line-height:20px;color:#111;font-weight:normal;transform:scaleX(1.1297);transform-origin:0 0;">Bianchi Mario</div>
<div id="t1e450de5" class="a t" style="left:548px;top:432px;font-size:12px;line-height:20px;color:#111;font-weight:normal;transform:scaleX(1.1578);transform-origin:0 0;">Stucki Patrick</div>
<div id="t6ec2f62e" class="a t" style="left:548px;top:446px;font-size:12px;line-height:20px;color:#111;font-weight:normal;transform:scaleX(1.1634);transform-origin:0 0;">Walz Markus</div>
<div class="a" style="left:709px;top:374px;width:107px;height:19px;background:linear-gradient(#fbfbf6,#ecebe2 50%,#c9c8b8);border:1px solid #868676;border-radius:3px"></div>
<svg class="a" style="left:714px;top:370px;" width="18" height="18" viewBox="0 0 18 18"><circle cx="7" cy="7" r="5.2" fill="#e8e8f0" stroke="#222" stroke-width="1.6"/><path d="M10.8 10.8 L15.5 15.5" stroke="#222" stroke-width="2.6" stroke-linecap="round"/><path d="M11.2 11.2 L15 15" stroke="#ddd" stroke-width="0.8"/></svg>
<div id="te0e44fd5" class="a t" style="left:740px;top:374px;font-size:12px;line-height:20px;color:#111;font-weight:normal;transform:scaleX(0.9836);transform-origin:0 0;">Freie Zeiten</div>
<div class="a" style="left:693px;top:443px;width:87px;height:18px;background:#f5f5e8;border:1px solid #fbfbf6"></div>
<svg class="a" style="left:781px;top:442px;" width="22" height="21" viewBox="0 0 22 21"><rect x="7.5" y="6.5" width="11" height="13" fill="#fff" stroke="#111"/><path d="M9 20.5 H19.5 V8" fill="none" stroke="#1a2a8a" stroke-width="2"/><circle cx="7.5" cy="8.5" r="6" fill="#eee" stroke="#111"/><path d="M7.5 4.5 V8.5 H10.5" stroke="#d00" stroke-width="1.2" fill="none"/><rect x="6" y="1" width="3" height="2" fill="#111"/><path d="M10 17 H17 M10 14.5 H15" fill="none" stroke="#555"/></svg>
<div class="a" style="left:543px;top:505px;width:69px;height:18px;background:#f5f5e8;border:1px solid #fbfbf6"></div>
<div id="t6a24e47b" class="a t" style="left:545px;top:505px;font-size:13px;line-height:20px;color:#111;font-weight:normal;transform:scaleX(1.1095);transform-origin:0 0;">10:00</div>
<div class="a" style="left:617px;top:505px;width:41px;height:18px;background:linear-gradient(#fafaf2,#f0efe4)"></div>
<div id="t28a4da5d" class="a t" style="left:622px;top:505px;font-size:13px;line-height:20px;color:#111;font-weight:normal;">0</div>
<svg class="a" style="left:644px;top:511px;" width="8" height="7" viewBox="0 0 8 7"><path d="M0.5 0.5 H7.5 L4 6 Z" fill="#111"/></svg>
<div class="a" style="left:663px;top:505px;width:41px;height:18px;background:linear-gradient(#fafaf2,#f0efe4)"></div>
<div id="t3926e1a3" class="a t" style="left:668px;top:505px;font-size:13px;line-height:20px;color:#111;font-weight:normal;letter-spacing:0.8px">00</div>
<svg class="a" style="left:690px;top:511px;" width="8" height="7" viewBox="0 0 8 7"><path d="M0.5 0.5 H7.5 L4 6 Z" fill="#111"/></svg>
<div class="a" style="left:617px;top:534px;width:41px;height:18px;background:linear-gradient(#fafaf2,#f0efe4)"></div>
<div id="te04e8545" class="a t" style="left:622px;top:534px;font-size:13px;line-height:20px;color:#111;font-weight:normal;">0</div>
<svg class="a" style="left:644px;top:540px;" width="8" height="7" viewBox="0 0 8 7"><path d="M0.5 0.5 H7.5 L4 6 Z" fill="#111"/></svg>
<div class="a" style="left:663px;top:534px;width:41px;height:18px;background:linear-gradient(#fafaf2,#f0efe4)"></div>
<div id="tb2fc0d84" class="a t" style="left:668px;top:534px;font-size:13px;line-height:20px;color:#111;font-weight:normal;letter-spacing:0.8px">00</div>
<svg class="a" style="left:690px;top:540px;" width="8" height="7" viewBox="0 0 8 7"><path d="M0.5 0.5 H7.5 L4 6 Z" fill="#111"/></svg>
<div class="a" style="left:543px;top:534px;width:69px;height:18px;background:#f5f5e8;border:1px solid #fbfbf6"></div>
<div id="t020053ec" class="a t" style="left:714px;top:504px;font-size:13px;line-height:20px;color:#111;font-weight:normal;transform:scaleX(1.0528);transform-origin:0 0;">TS 06:12 / SR 06:44 (UTC)</div>
<div id="t1bfee188" class="a t" style="left:714px;top:534px;font-size:13px;line-height:20px;color:#111;font-weight:normal;transform:scaleX(1.0591);transform-origin:0 0;">SS 16:35 / TE 17:07 (UTC)</div>
<div id="t73448661" class="a t" style="left:548px;top:603px;font-size:13px;line-height:20px;color:#111;font-weight:bold;transform:scaleX(1.0743);transform-origin:0 0;">Dmitriy Reznitskiy</div>
<div class="a" style="left:763px;top:602px;width:69px;height:20px;background:linear-gradient(#fbfbf6,#ecebe2 50%,#c9c8b8);border:1px solid #868676;border-radius:3px"></div>
<svg class="a" style="left:767px;top:598px;" width="18" height="17" viewBox="0 0 18 17"><circle cx="9" cy="5" r="3.8" fill="#b08050" stroke="#1a2a3a" stroke-width="1"/><rect x="1.5" y="9.5" width="15" height="6" rx="1.5" fill="#a8d070" stroke="#1a2a3a" stroke-width="1.2"/><path d="M3 12.5 H15" stroke="#d0e8a0" stroke-width="0.8"/></svg>
<div id="t69cd8d18" class="a t" style="left:793px;top:603px;font-size:12px;line-height:20px;color:#111;font-weight:normal;transform:scaleX(0.9028);transform-origin:0 0;">Name</div>
<div class="a" style="left:851px;top:603px;width:19px;height:19px;background:linear-gradient(#fbfbf6,#ecebe2 50%,#c9c8b8);border:1px solid #868676;border-radius:3px"></div>
<svg class="a" style="left:853px;top:603px;" width="15" height="18" viewBox="0 0 15 18"><path d="M3 4 C3 2 4.5 1 7.5 1 C10.5 1 12 2 12 4 V10 C12 12 10.5 13 8 13 L5 16.5 L5.5 13 C4 12.5 3 11.5 3 10 Z" fill="#3a4a9a" transform="translate(1.2,1)"/><path d="M3 4 C3 2 4.5 1 7.5 1 C10.5 1 12 2 12 4 V10 C12 12 10.5 13 8 13 L5 16.5 L5.5 13 C4 12.5 3 11.5 3 10 Z" fill="#f6dc1c" stroke="#111" stroke-width="1.1"/><path d="M5.8 5.5 C5.8 3.8 9.2 3.8 9.2 5.5 C9.2 6.8 7.5 7 7.5 8.8" fill="none" stroke="#111" stroke-width="1.4"/><rect x="6.8" y="10" width="1.5" height="1.5" fill="#111"/></svg>
<div class="a" style="left:543px;top:636px;width:319px;height:46px;background:#f5f5e8;border:1px solid #fbfbf6"></div>
<div class="a" style="left:543px;top:692px;width:319px;height:18px;background:#f5f5e8;border:1px solid #fbfbf6"></div>
<svg class="a" style="left:853px;top:673px;" width="8" height="8" viewBox="0 0 8 8"><path d="M7 1 L1 7 M7 4 L4 7" stroke="#777" stroke-width="1"/></svg>
<svg class="a" style="left:853px;top:701px;" width="8" height="8" viewBox="0 0 8 8"><path d="M7 1 L1 7 M7 4 L4 7" stroke="#777" stroke-width="1"/></svg>
<div class="a" style="left:543px;top:720px;width:41px;height:18px;background:linear-gradient(#fafaf2,#f0efe4)"></div>
<div id="t845e82f7" class="a t" style="left:548px;top:720px;font-size:13px;line-height:20px;color:#111;font-weight:normal;">0</div>
<svg class="a" style="left:570px;top:726px;" width="8" height="7" viewBox="0 0 8 7"><path d="M0.5 0.5 H7.5 L4 6 Z" fill="#111"/></svg>
<div class="a" style="left:543px;top:749px;width:45px;height:18px;background:#f5f5e8;border:1px solid #fbfbf6"></div>
<div class="a" style="left:301px;top:796px;width:99px;height:19px;background:linear-gradient(#fbfbf6,#ecebe2 50%,#c9c8b8);border:1px solid #868676;border-radius:3px"></div>
<svg class="a" style="left:305px;top:793px;" width="16" height="14" viewBox="0 0 16 14"><path d="M1.5 7 L5.5 11.5 L14.5 1.5" fill="none" stroke="#222" stroke-width="4" stroke-linejoin="round"/><path d="M1.8 7 L5.5 11 L14.2 1.8" fill="none" stroke="#2aa02a" stroke-width="2"/></svg>
<div id="tf16d9c50" class="a t" style="left:336px;top:796px;font-size:12px;line-height:20px;color:#111;font-weight:normal;transform:scaleX(0.9330);transform-origin:0 0;">Eintragen</div>
<div class="a" style="left:422px;top:795px;width:87px;height:19px;background:linear-gradient(#fbfbf6,#ecebe2 50%,#c9c8b8);border:1px solid #868676;border-radius:3px"></div>
<svg class="a" style="left:427px;top:791px;" width="16" height="15" viewBox="0 0 16 15"><path d="M2 2 L13 13 M13 2 L2 13" stroke="#fff" stroke-width="4"/><path d="M2 2 L13 13 M13 2 L2 13" stroke="#e02020" stroke-width="2.4"/></svg>
<div id="tf605b97a" class="a t" style="left:447px;top:795px;font-size:12px;line-height:20px;color:#111;font-weight:normal;transform:scaleX(0.9466);transform-origin:0 0;">Abbrechen</div>
</body></html>
